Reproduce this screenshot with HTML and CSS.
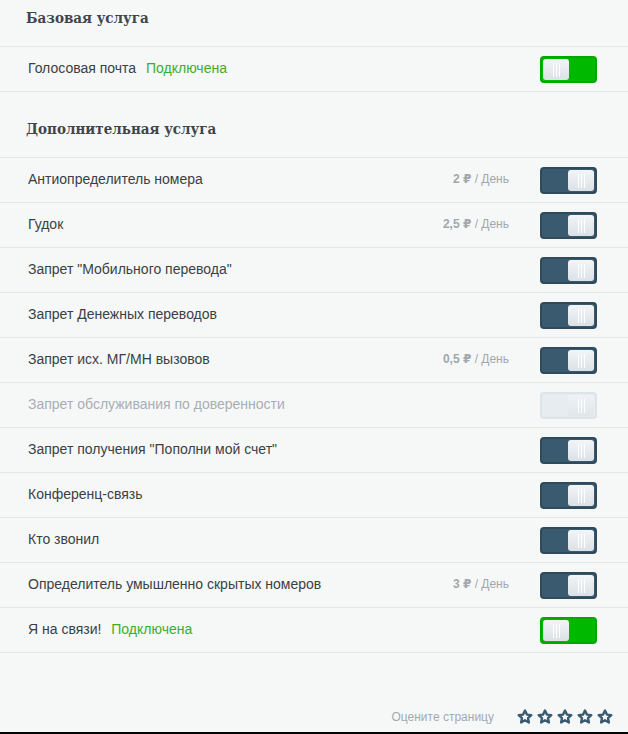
FILE: index.html
```html
<!DOCTYPE html>
<html lang="ru">
<head>
    <meta charset="UTF-8">
    <title>Услуги</title>
    <link rel="stylesheet" href="styles.css">
</head>
<body>
    <div class="page">

        <div class="section section-first">
            <h2>Базовая услуга</h2>
            <div class="row">
                <div class="name">Голосовая почта <span class="status">Подключена</span></div>
                <span class="switch switch-on"><span class="knob"></span></span>
            </div>
        </div>

        <div class="section">
            <h2>Дополнительная услуга</h2>
            <div class="row">
                <div class="name">Антиопределитель номера</div>
                <div class="price"><b>2 ₽</b> / День</div>
                <span class="switch"><span class="knob"></span></span>
            </div>
            <div class="row">
                <div class="name">Гудок</div>
                <div class="price"><b>2,5 ₽</b> / День</div>
                <span class="switch"><span class="knob"></span></span>
            </div>
            <div class="row">
                <div class="name">Запрет "Мобильного перевода"</div>
                <span class="switch"><span class="knob"></span></span>
            </div>
            <div class="row">
                <div class="name">Запрет Денежных переводов</div>
                <span class="switch"><span class="knob"></span></span>
            </div>
            <div class="row">
                <div class="name">Запрет исх. МГ/МН вызовов</div>
                <div class="price"><b>0,5 ₽</b> / День</div>
                <span class="switch"><span class="knob"></span></span>
            </div>
            <div class="row row-disabled">
                <div class="name">Запрет обслуживания по доверенности</div>
                <span class="switch switch-disabled"><span class="knob"></span></span>
            </div>
            <div class="row">
                <div class="name">Запрет получения "Пополни мой счет"</div>
                <span class="switch"><span class="knob"></span></span>
            </div>
            <div class="row">
                <div class="name">Конференц-связь</div>
                <span class="switch"><span class="knob"></span></span>
            </div>
            <div class="row">
                <div class="name">Кто звонил</div>
                <span class="switch"><span class="knob"></span></span>
            </div>
            <div class="row">
                <div class="name">Определитель умышленно скрытых номеров</div>
                <div class="price"><b>3 ₽</b> / День</div>
                <span class="switch"><span class="knob"></span></span>
            </div>
            <div class="row">
                <div class="name">Я на связи! <span class="status">Подключена</span></div>
                <span class="switch switch-on"><span class="knob"></span></span>
            </div>
        </div>

        <div class="rate">
            <span class="rate-label">Оцените страницу</span>
            <div class="stars">
                <svg class="star" viewBox="0 0 16 16"><polygon points="8,1.6 9.9,5.6 14.3,6.1 11,9.1 11.9,13.5 8,11.3 4.1,13.5 5,9.1 1.7,6.1 6.1,5.6"/></svg>
                <svg class="star" viewBox="0 0 16 16"><polygon points="8,1.6 9.9,5.6 14.3,6.1 11,9.1 11.9,13.5 8,11.3 4.1,13.5 5,9.1 1.7,6.1 6.1,5.6"/></svg>
                <svg class="star" viewBox="0 0 16 16"><polygon points="8,1.6 9.9,5.6 14.3,6.1 11,9.1 11.9,13.5 8,11.3 4.1,13.5 5,9.1 1.7,6.1 6.1,5.6"/></svg>
                <svg class="star" viewBox="0 0 16 16"><polygon points="8,1.6 9.9,5.6 14.3,6.1 11,9.1 11.9,13.5 8,11.3 4.1,13.5 5,9.1 1.7,6.1 6.1,5.6"/></svg>
                <svg class="star" viewBox="0 0 16 16"><polygon points="8,1.6 9.9,5.6 14.3,6.1 11,9.1 11.9,13.5 8,11.3 4.1,13.5 5,9.1 1.7,6.1 6.1,5.6"/></svg>
            </div>
        </div>

    </div>
</body>
</html>
```

FILE: styles.css
```css
html {
    background: #000;
}

body {
    margin: 0;
    font-family: "Liberation Sans", Arial, "DejaVu Sans", sans-serif;
    font-size: 14px;
    color: #3a3f44;
    background: #f6f8f8;
    height: 732px;
    overflow: hidden;
}

h2 {
    margin: 0;
    padding: 8px 0 18px 26px;
    font-family: "DejaVu Serif Condensed", "DejaVu Serif", serif;
    font-size: 15px;
    line-height: 20px;
    color: #404549;
    border-bottom: 1px solid #e3e6ea;
}

.section + .section h2 {
    padding-top: 27px;
}

.row {
    display: flex;
    align-items: center;
    height: 44px;
    padding: 0 31px 0 28px;
    border-bottom: 1px solid #e3e6ea;
}

.name {
    flex: 1;
    margin-bottom: 2px;
}

.status {
    margin-left: 6px;
    color: #3aae2a;
}

.row-disabled .name {
    color: #a8aeb4;
}

.price {
    margin: 0 31px 2px 0;
    font-size: 12px;
    color: #a1a7ae;
}

.price b {
    font-weight: bold;
}

.switch {
    display: flex;
    justify-content: flex-end;
    box-sizing: border-box;
    width: 57px;
    height: 27px;
    padding: 1px;
    border: 2px solid #2f4a5b;
    border-radius: 4px;
    background: #395a6f;
    margin-top: 1px;
}

.knob {
    position: relative;
    width: 26px;
    height: 21px;
    border-radius: 3px;
    background: linear-gradient(#f3f5f7, #dbe1e6);
}

.knob::before {
    content: "";
    position: absolute;
    left: 9px;
    top: 4px;
    width: 8px;
    height: 14px;
    background: linear-gradient(to right,
        transparent 1px, #ffffff 1px, #ffffff 2px, transparent 2px,
        transparent 4px, #ffffff 4px, #ffffff 5px, transparent 5px,
        transparent 7px, #ffffff 7px, #ffffff 8px, transparent 8px);
}

.switch-on {
    justify-content: flex-start;
    background: #00b800;
    border-color: #00a800;
}

.switch-disabled {
    background: #e6ecef;
    border-color: #dde4e8;
}

.switch-disabled .knob {
    background: linear-gradient(#eef2f4, #e0e6e9);
}

.rate {
    display: flex;
    justify-content: flex-end;
    align-items: center;
    padding: 56px 15px 0 0;
}

.rate-label {
    margin-right: 23px;
    font-size: 12px;
    color: #a1a9b1;
}

.stars {
    display: flex;
    gap: 4px;
}

.star {
    width: 16px;
    height: 16px;
    fill: none;
    stroke: #3a5a6f;
    stroke-width: 2.4;
    stroke-linejoin: round;
}
```
